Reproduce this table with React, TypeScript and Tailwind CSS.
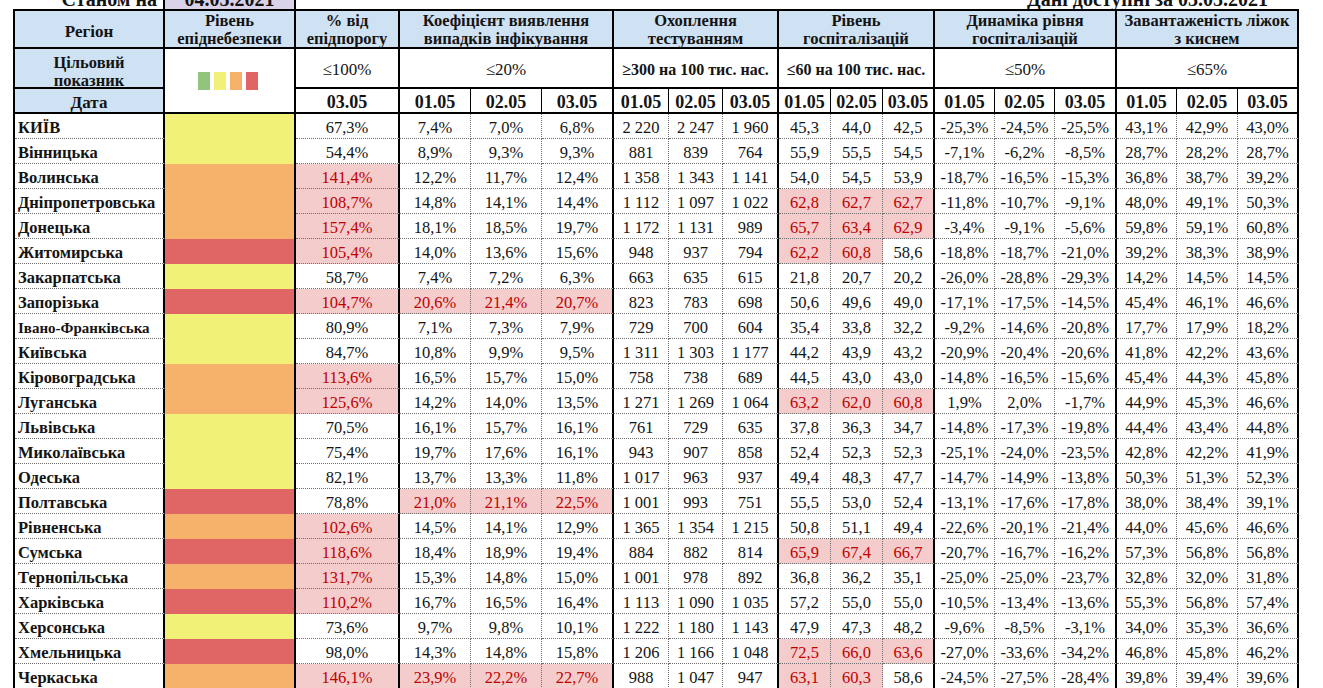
import { Fragment } from "react";

type Level = "y" | "o" | "r";

type Row = {
  name: string;
  level: Level;
  pct: string;
  koef: string[];
  tests: string[];
  hosp: string[];
  dyn: string[];
  beds: string[];
};

const r = (
  name: string,
  level: Level,
  pct: string,
  koef: string[],
  tests: string[],
  hosp: string[],
  dyn: string[],
  beds: string[]
): Row => ({ name, level, pct, koef, tests, hosp, dyn, beds });

const rows: Row[] = [
  r("КИЇВ", "y", "67,3%", ["7,4%", "7,0%", "6,8%"], ["2 220", "2 247", "1 960"], ["45,3", "44,0", "42,5"], ["-25,3%", "-24,5%", "-25,5%"], ["43,1%", "42,9%", "43,0%"]),
  r("Вінницька", "y", "54,4%", ["8,9%", "9,3%", "9,3%"], ["881", "839", "764"], ["55,9", "55,5", "54,5"], ["-7,1%", "-6,2%", "-8,5%"], ["28,7%", "28,2%", "28,7%"]),
  r("Волинська", "o", "141,4%", ["12,2%", "11,7%", "12,4%"], ["1 358", "1 343", "1 141"], ["54,0", "54,5", "53,9"], ["-18,7%", "-16,5%", "-15,3%"], ["36,8%", "38,7%", "39,2%"]),
  r("Дніпропетровська", "o", "108,7%", ["14,8%", "14,1%", "14,4%"], ["1 112", "1 097", "1 022"], ["62,8", "62,7", "62,7"], ["-11,8%", "-10,7%", "-9,1%"], ["48,0%", "49,1%", "50,3%"]),
  r("Донецька", "o", "157,4%", ["18,1%", "18,5%", "19,7%"], ["1 172", "1 131", "989"], ["65,7", "63,4", "62,9"], ["-3,4%", "-9,1%", "-5,6%"], ["59,8%", "59,1%", "60,8%"]),
  r("Житомирська", "r", "105,4%", ["14,0%", "13,6%", "15,6%"], ["948", "937", "794"], ["62,2", "60,8", "58,6"], ["-18,8%", "-18,7%", "-21,0%"], ["39,2%", "38,3%", "38,9%"]),
  r("Закарпатська", "y", "58,7%", ["7,4%", "7,2%", "6,3%"], ["663", "635", "615"], ["21,8", "20,7", "20,2"], ["-26,0%", "-28,8%", "-29,3%"], ["14,2%", "14,5%", "14,5%"]),
  r("Запорізька", "r", "104,7%", ["20,6%", "21,4%", "20,7%"], ["823", "783", "698"], ["50,6", "49,6", "49,0"], ["-17,1%", "-17,5%", "-14,5%"], ["45,4%", "46,1%", "46,6%"]),
  r("Івано-Франківська", "y", "80,9%", ["7,1%", "7,3%", "7,9%"], ["729", "700", "604"], ["35,4", "33,8", "32,2"], ["-9,2%", "-14,6%", "-20,8%"], ["17,7%", "17,9%", "18,2%"]),
  r("Київська", "y", "84,7%", ["10,8%", "9,9%", "9,5%"], ["1 311", "1 303", "1 177"], ["44,2", "43,9", "43,2"], ["-20,9%", "-20,4%", "-20,6%"], ["41,8%", "42,2%", "43,6%"]),
  r("Кіровоградська", "o", "113,6%", ["16,5%", "15,7%", "15,0%"], ["758", "738", "689"], ["44,5", "43,0", "43,0"], ["-14,8%", "-16,5%", "-15,6%"], ["45,4%", "44,3%", "45,8%"]),
  r("Луганська", "o", "125,6%", ["14,2%", "14,0%", "13,5%"], ["1 271", "1 269", "1 064"], ["63,2", "62,0", "60,8"], ["1,9%", "2,0%", "-1,7%"], ["44,9%", "45,3%", "46,6%"]),
  r("Львівська", "y", "70,5%", ["16,1%", "15,7%", "16,1%"], ["761", "729", "635"], ["37,8", "36,3", "34,7"], ["-14,8%", "-17,3%", "-19,8%"], ["44,4%", "43,4%", "44,8%"]),
  r("Миколаївська", "y", "75,4%", ["19,7%", "17,6%", "16,1%"], ["943", "907", "858"], ["52,4", "52,3", "52,3"], ["-25,1%", "-24,0%", "-23,5%"], ["42,8%", "42,2%", "41,9%"]),
  r("Одеська", "y", "82,1%", ["13,7%", "13,3%", "11,8%"], ["1 017", "963", "937"], ["49,4", "48,3", "47,7"], ["-14,7%", "-14,9%", "-13,8%"], ["50,3%", "51,3%", "52,3%"]),
  r("Полтавська", "r", "78,8%", ["21,0%", "21,1%", "22,5%"], ["1 001", "993", "751"], ["55,5", "53,0", "52,4"], ["-13,1%", "-17,6%", "-17,8%"], ["38,0%", "38,4%", "39,1%"]),
  r("Рівненська", "o", "102,6%", ["14,5%", "14,1%", "12,9%"], ["1 365", "1 354", "1 215"], ["50,8", "51,1", "49,4"], ["-22,6%", "-20,1%", "-21,4%"], ["44,0%", "45,6%", "46,6%"]),
  r("Сумська", "r", "118,6%", ["18,4%", "18,9%", "19,4%"], ["884", "882", "814"], ["65,9", "67,4", "66,7"], ["-20,7%", "-16,7%", "-16,2%"], ["57,3%", "56,8%", "56,8%"]),
  r("Тернопільська", "o", "131,7%", ["15,3%", "14,8%", "15,0%"], ["1 001", "978", "892"], ["36,8", "36,2", "35,1"], ["-25,0%", "-25,0%", "-23,7%"], ["32,8%", "32,0%", "31,8%"]),
  r("Харківська", "r", "110,2%", ["16,7%", "16,5%", "16,4%"], ["1 113", "1 090", "1 035"], ["57,2", "55,0", "55,0"], ["-10,5%", "-13,4%", "-13,6%"], ["55,3%", "56,8%", "57,4%"]),
  r("Херсонська", "y", "73,6%", ["9,7%", "9,8%", "10,1%"], ["1 222", "1 180", "1 143"], ["47,9", "47,3", "48,2"], ["-9,6%", "-8,5%", "-3,1%"], ["34,0%", "35,3%", "36,6%"]),
  r("Хмельницька", "r", "98,0%", ["14,3%", "14,8%", "15,8%"], ["1 206", "1 166", "1 048"], ["72,5", "66,0", "63,6"], ["-27,0%", "-33,6%", "-34,2%"], ["46,8%", "45,8%", "46,2%"]),
  r("Черкаська", "o", "146,1%", ["23,9%", "22,2%", "22,7%"], ["988", "1 047", "947"], ["63,1", "60,3", "58,6"], ["-24,5%", "-27,5%", "-28,4%"], ["39,8%", "39,4%", "39,6%"]),
];

const levelBg: Record<Level, string> = {
  y: "bg-[#f1f177]",
  o: "bg-[#f6b26b]",
  r: "bg-[#e06666]",
};

const thickR = "[border-right:2px_solid_#000]";
const thinR = "[border-right:1px_solid_#000]";
const dotR = "[border-right:1px_dotted_#6f6f6f]";
const thickB = "[border-bottom:2px_solid_#000]";
const dotB = "[border-bottom:1px_dotted_#6f6f6f]";

const headBg = "bg-[#cfe2f3]";

const num = (s: string) => parseFloat(s.replace(/\s/g, "").replace(",", "."));

function Cell({ value, last, hot }: { value: string; last?: boolean; hot?: boolean }) {
  return (
    <div
      className={`${last ? thickR : dotR} ${dotB} flex items-center justify-center pt-[4px] text-[16.5px] ${
        hot ? "bg-[#f4cccc] text-[#c00000]" : "text-[#141414]"
      }`}
    >
      {value}
    </div>
  );
}

function Triple({ values, limit }: { values: string[]; limit?: number }) {
  return (
    <>
      {values.map((v, i) => (
        <Cell key={i} value={v} last={i === 2} hot={limit !== undefined && num(v) > limit} />
      ))}
    </>
  );
}

function HeadGroup({ children }: { children: React.ReactNode }) {
  return (
    <div
      className={`col-span-3 ${thickR} ${thickB} ${headBg} flex items-center justify-center pt-[1px] text-center text-[16.5px] font-bold leading-[18px]`}
    >
      <div>{children}</div>
    </div>
  );
}

function Target({ children, bold }: { children: React.ReactNode; bold?: boolean }) {
  return (
    <div
      className={`col-span-3 ${thickR} ${thickB} flex items-center justify-center pt-[4px] ${
        bold ? "text-[16px] font-bold" : "text-[17px]"
      }`}
    >
      {children}
    </div>
  );
}

function Dates() {
  return (
    <>
      {["01.05", "02.05", "03.05"].map((d, i) => (
        <div
          key={d}
          className={`${i === 2 ? thickR : thinR} ${thickB} flex items-center justify-center pt-[4px] text-[18px] font-bold`}
        >
          {d}
        </div>
      ))}
    </>
  );
}

export default function App() {
  return (
    <div className="w-[1323px] h-[688px] overflow-hidden bg-white font-['Liberation_Serif',serif] text-[#141414]">
      <div className="flex h-[9px] overflow-hidden items-end text-[20px] font-bold leading-none">
        <div className="w-[163px] shrink-0 pr-[6px] text-right">Станом на</div>
        <div className="w-[133px] shrink-0 h-full flex items-end justify-center border-x-2 border-black bg-[#d9d2e9]">
          04.05.2021
        </div>
        <div className="flex-1 text-right pr-[55px]">Дані доступні за 03.05.2021</div>
      </div>

      <div className="ml-[13px] w-[1286px] grid grid-cols-[150px_131px_104px_71px_71px_72px_55px_54px_56px_52px_52px_52px_60px_60px_62px_60px_61px_61px] grid-rows-[38px_40px_25px] auto-rows-[25px] border-l-2 border-t-2 border-black">
        {/* header row */}
        <div className={`${thickR} ${thickB} ${headBg} flex items-center justify-center pt-[5px] text-[17px] font-bold`}>
          Регіон
        </div>
        <div className={`${thickR} ${thickB} ${headBg} flex items-center justify-center pt-[1px] text-center text-[16.5px] font-bold leading-[18px]`}>
          Рівень
          <br />
          епіднебезпеки
        </div>
        <div className={`${thickR} ${thickB} ${headBg} flex items-center justify-center pt-[1px] text-center text-[16.5px] font-bold leading-[18px]`}>
          % від
          <br />
          епідпорогу
        </div>
        <HeadGroup>
          Коефіцієнт виявлення
          <br />
          випадків інфікування
        </HeadGroup>
        <HeadGroup>
          Охоплення
          <br />
          тестуванням
        </HeadGroup>
        <HeadGroup>
          Рівень
          <br />
          госпіталізацій
        </HeadGroup>
        <HeadGroup>
          Динаміка рівня
          <br />
          госпіталізацій
        </HeadGroup>
        <HeadGroup>
          Завантаженість ліжок
          <br />з киснем
        </HeadGroup>

        {/* target row */}
        <div className={`${thickR} ${thickB} ${headBg} flex items-center justify-center pt-[7px] text-center text-[16.5px] font-bold leading-[18px]`}>
          Цільовий
          <br />
          показник
        </div>
        <div className={`row-span-2 ${thickR} ${thickB} flex items-center justify-center gap-[4px] pr-[3px]`}>
          <span className="w-[12px] h-[18px] bg-[#93c47d]" />
          <span className="w-[12px] h-[18px] bg-[#f1f177]" />
          <span className="w-[12px] h-[18px] bg-[#f6b26b]" />
          <span className="w-[12px] h-[18px] bg-[#e06666]" />
        </div>
        <div className={`${thickR} ${thickB} flex items-center justify-center pt-[4px] text-[17px]`}>≤100%</div>
        <Target>≤20%</Target>
        <Target bold>≥300 на 100 тис. нас.</Target>
        <Target bold>≤60 на 100 тис. нас.</Target>
        <Target>≤50%</Target>
        <Target>≤65%</Target>

        {/* dates row */}
        <div className={`${thickR} ${thickB} ${headBg} flex items-center justify-center pt-[4px] text-[17px] font-bold`}>
          Дата
        </div>
        <div className={`${thickR} ${thickB} flex items-center justify-center pt-[4px] text-[18px] font-bold`}>03.05</div>
        <Dates />
        <Dates />
        <Dates />
        <Dates />
        <Dates />

        {rows.map((row) => (
          <Fragment key={row.name}>
            <div
              className={`${thickR} ${dotB} flex items-center pl-[3px] pt-[4px] font-bold ${
                row.name.length > 16 ? "text-[15px]" : "text-[16.5px]"
              }`}
            >
              {row.name}
            </div>
            <div className={`${thickR} ${levelBg[row.level]}`} />
            <Cell value={row.pct} last hot={num(row.pct) > 100} />
            <Triple values={row.koef} limit={20} />
            <Triple values={row.tests} />
            <Triple values={row.hosp} limit={60} />
            <Triple values={row.dyn} />
            <Triple values={row.beds} />
          </Fragment>
        ))}
      </div>
    </div>
  );
}
